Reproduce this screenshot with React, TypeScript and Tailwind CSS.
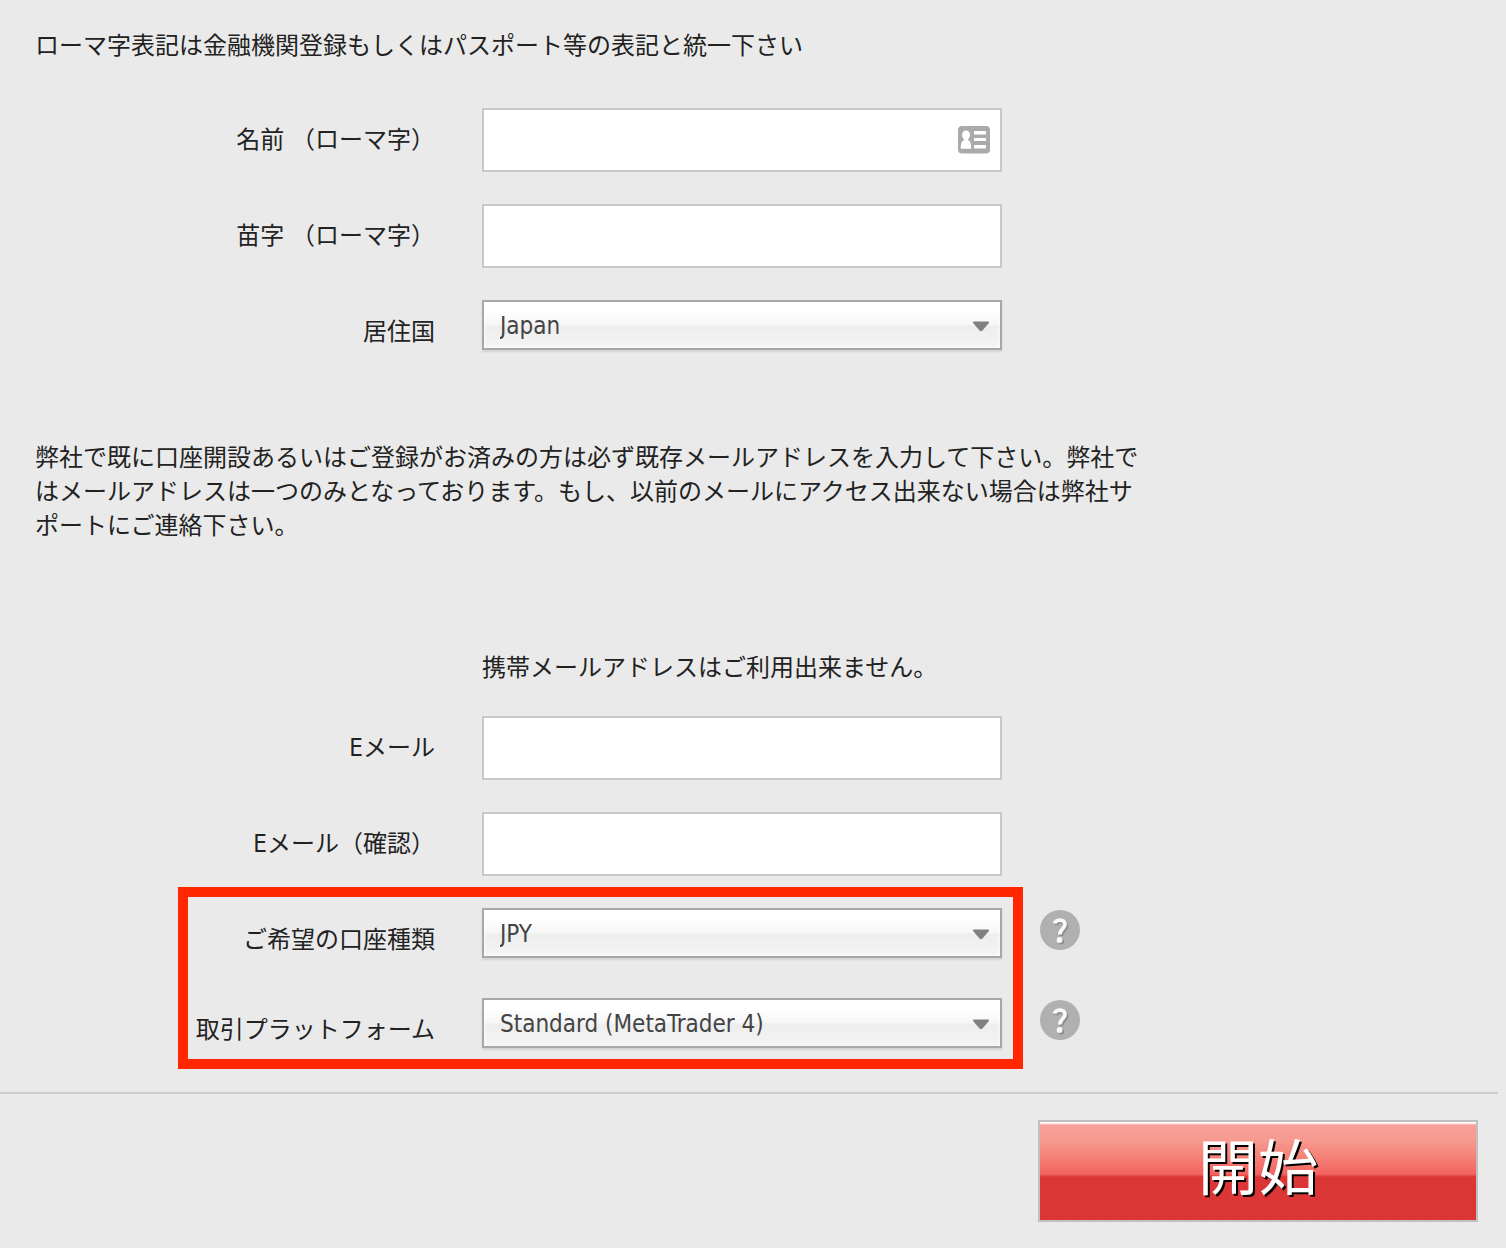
import React, { useState } from 'react';

const LABEL = 'w-[435px] shrink-0 pt-[15px] text-right leading-[34px] whitespace-pre';
const FIELD_WIDTH = 'w-[520px]';

interface FieldRowProps {
    id: string;
    label: string;
    children: React.ReactNode;
}

function FieldRow({ id, label, children }: FieldRowProps) {
    return (
        <div className="flex items-start">
            <label htmlFor={id} className={LABEL}>{label}</label>
            <div className="ml-[47px] flex items-start">{children}</div>
        </div>
    );
}

interface TextFieldProps {
    id: string;
    type?: string;
    icon?: React.ReactNode;
}

function TextField({ id, type = 'text', icon }: TextFieldProps) {
    const [value, setValue] = useState('');

    return (
        <div className={`relative ${FIELD_WIDTH}`}>
            <input
                id={id}
                type={type}
                value={value}
                onChange={(e) => setValue(e.target.value)}
                className="block h-16 w-full border-2 border-[#c8c8c8] bg-white px-4 outline-none"
            />
            {icon}
        </div>
    );
}

interface SelectFieldProps {
    id: string;
    options: string[];
}

function SelectField({ id, options }: SelectFieldProps) {
    return (
        <div className={`relative ${FIELD_WIDTH}`}>
            <select
                id={id}
                defaultValue={options[0]}
                className="block h-[50px] w-full appearance-none border-2 border-[#a8a8a8] bg-[linear-gradient(to_bottom,#ffffff_0%,#ffffff_20%,#f6f6f6_50%,#eeeeee_52%,#f4f4f4_100%)] pl-4 pr-12 pt-0.5 text-[#444444] shadow-[0_2px_2px_rgba(0,0,0,0.1),inset_0_0_4px_#ffffff] outline-none"
            >
                {options.map((option) => (
                    <option key={option}>{option}</option>
                ))}
            </select>
            <svg
                className="pointer-events-none absolute right-3 top-5 h-3 w-[18px]"
                viewBox="0 0 18 12"
                aria-hidden="true"
            >
                <path d="M1.500 1.500H16.500Q18 2 16.500 3.500L10.500 10.500Q9 12 7.500 10.500L1.500 3.500Q0 2 1.500 1.500Z" fill="#808080" />
            </svg>
        </div>
    );
}

function ContactCardIcon() {
    return (
        <svg
            className="pointer-events-none absolute right-3 top-[18px] h-7 w-8"
            viewBox="0 0 32 28"
            aria-hidden="true"
        >
            <rect width="32" height="27.5" rx="4" fill="#aaaaaa" />
            <ellipse cx="8" cy="9" rx="4" ry="4.500" fill="#ffffff" />
            <path d="M6 12h4v2.200c2.200.6 3.200 2.300 3.200 8.600H2.800c0-6.300 1-8 3.200-8.600Z" fill="#ffffff" />
            <path d="M16 5h12v3.500H16zM16 12h12v3H16zM16 19h12v3.500H16z" fill="#ffffff" />
        </svg>
    );
}

function HelpButton({ label }: { label: string }) {
    return (
        <button type="button" aria-label={label} className="ml-[38px] mt-0.5 h-10 w-10 shrink-0 cursor-pointer">
            <svg viewBox="0 0 40 40" className="h-10 w-10" aria-hidden="true">
                <circle cx="20" cy="20" r="20" fill="#b0b0b0" />
                <g transform="translate(1.500 1.500)">
                    <path d="M14.500 13.500C15.500 9 25.200 8.500 25 14.500C24.800 18.500 20 19 19.800 24.500" fill="none" stroke="#8c8c8c" strokeWidth="3.800" />
                    <circle cx="19.600" cy="30" r="2.900" fill="#8c8c8c" />
                </g>
                <path d="M14.500 13.500C15.500 9 25.200 8.500 25 14.500C24.800 18.500 20 19 19.800 24.500" fill="none" stroke="#f8f8f8" strokeWidth="3.800" />
                <circle cx="19.600" cy="30" r="2.900" fill="#f8f8f8" />
            </svg>
        </button>
    );
}

export default function App() {
    return (
        <form
            lang="ja"
            onSubmit={(e) => e.preventDefault()}
            className="min-h-screen bg-[#eaeaea] pb-[26px] pt-[29px] font-['DejaVu_Sans_Condensed','Noto_Sans_CJK_JP',sans-serif] text-[24px] leading-[34px] text-[#222222]"
        >
            <p className="px-[35px]">ローマ字表記は金融機関登録もしくはパスポート等の表記と統一下さい</p>

            <div className="mt-[45px] flex flex-col gap-8">
                <FieldRow id="first-name" label="名前 （ローマ字）">
                    <TextField id="first-name" icon={<ContactCardIcon />} />
                </FieldRow>
                <FieldRow id="last-name" label="苗字 （ローマ字）">
                    <TextField id="last-name" />
                </FieldRow>
                <FieldRow id="country" label="居住国">
                    <SelectField id="country" options={['Japan']} />
                </FieldRow>
            </div>

            <p className="mt-[91px] max-w-[1180px] px-[35px]">
                弊社で既に口座開設あるいはご登録がお済みの方は必ず既存メールアドレスを入力して下さい。弊社ではメールアドレスは一つのみとなっております。もし、以前のメールにアクセス出来ない場合は弊社サポートにご連絡下さい。
            </p>

            <p className="mt-[108px] pl-[482px]">携帯メールアドレスはご利用出来ません。</p>

            <div className="mt-[31px] flex flex-col gap-8">
                <FieldRow id="email" label="Eメール">
                    <TextField id="email" type="email" />
                </FieldRow>
                <FieldRow id="email-confirm" label="Eメール（確認）">
                    <TextField id="email-confirm" type="email" />
                </FieldRow>

                {/* Account settings, framed in red */}
                <div className="relative flex flex-col gap-10">
                    <FieldRow id="account-type" label="ご希望の口座種類">
                        <SelectField id="account-type" options={['JPY']} />
                        <HelpButton label="ご希望の口座種類" />
                    </FieldRow>
                    <FieldRow id="platform" label="取引プラットフォーム">
                        <SelectField id="platform" options={['Standard (MetaTrader 4)']} />
                        <HelpButton label="取引プラットフォーム" />
                    </FieldRow>
                    <div className="pointer-events-none absolute -bottom-[21px] -top-[21px] left-[178px] w-[845px] border-[10px] border-[#ff2600]" />
                </div>
            </div>

            <hr className="mr-2 mt-11 border-t-2 border-[#cccccc]" />

            <div className="mt-[26px] flex justify-end pr-7">
                <button
                    type="submit"
                    className="flex h-[102px] w-[440px] cursor-pointer items-center justify-center border-2 border-[#c0c0c0] bg-[linear-gradient(to_bottom,#ffffff_0px,#ffffff_1px,#f8a09a_3px,#f79a90_18px,#f58378_34px,#f2645f_52px,#dc3535_55px,transparent_56px),repeating-linear-gradient(to_right,#dc3535_0px,#dc3535_15px,#d5403a_16px,#dc3535_17px)] [background-size:100%_100%,16px_100%] pb-1 text-[60px] leading-[80px] text-white [text-shadow:2px_2px_0_#000000]"
                >
                    開始
                </button>
            </div>
        </form>
    );
}
